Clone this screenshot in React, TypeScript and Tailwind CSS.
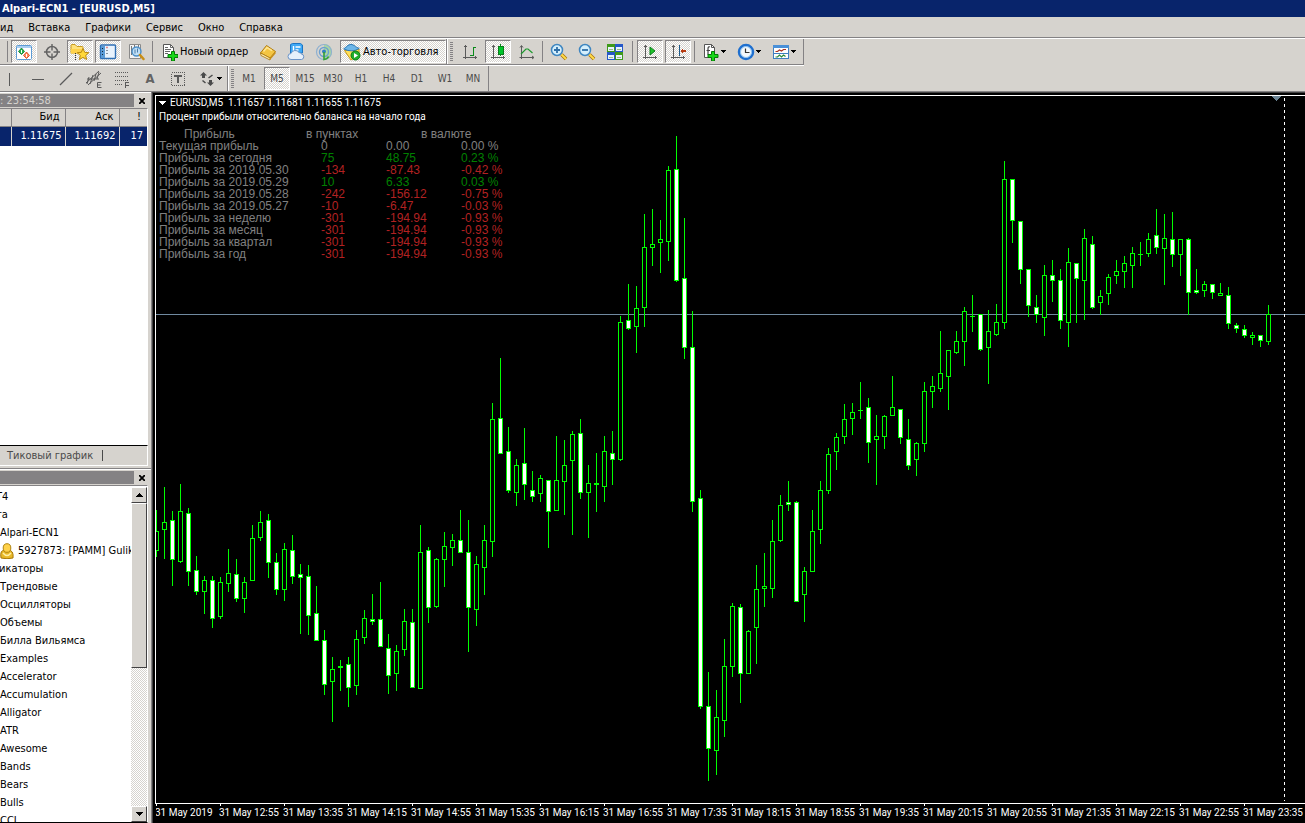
import type { ReactNode } from "react";

// [high, body top, body bottom, low, falling]
type Candle = [number, number, number, number, 0 | 1];

const candles: Candle[] = [
  [510, 531, 551, 557, 0], [487, 522, 530, 559, 0], [511, 520, 560, 586, 1], [484, 511, 562, 563, 0],
  [508, 513, 572, 586, 1], [556, 570, 592, 595, 1], [576, 580, 592, 614, 0], [576, 580, 619, 628, 1],
  [577, 582, 617, 619, 0], [549, 573, 584, 592, 0], [559, 574, 599, 602, 1], [577, 582, 599, 613, 0],
  [525, 538, 581, 581, 0], [511, 522, 538, 541, 0], [514, 520, 563, 578, 1], [553, 562, 590, 595, 1],
  [543, 549, 590, 601, 0], [535, 550, 577, 584, 1], [564, 574, 578, 634, 1], [565, 576, 616, 635, 1],
  [586, 613, 641, 641, 1], [630, 640, 685, 695, 1], [657, 669, 682, 722, 0], [660, 666, 668, 691, 0],
  [657, 664, 688, 707, 1], [630, 639, 686, 695, 0], [610, 618, 638, 644, 0], [594, 619, 622, 625, 1],
  [582, 619, 647, 647, 1], [634, 648, 676, 694, 1], [645, 651, 674, 691, 0], [609, 621, 650, 656, 0],
  [609, 622, 688, 688, 1], [525, 552, 689, 689, 0], [547, 550, 608, 623, 1], [558, 559, 607, 608, 0],
  [532, 546, 560, 587, 0], [534, 540, 548, 566, 0], [510, 540, 553, 553, 1], [520, 552, 608, 652, 1],
  [556, 564, 610, 626, 0], [525, 540, 568, 595, 0], [403, 419, 542, 557, 0], [358, 418, 454, 454, 1],
  [427, 451, 491, 493, 1], [459, 465, 493, 506, 0], [428, 463, 485, 500, 1], [471, 490, 497, 502, 1],
  [475, 478, 494, 502, 0], [480, 480, 512, 548, 1], [436, 480, 511, 511, 0], [440, 465, 482, 515, 0],
  [431, 434, 461, 535, 0], [419, 433, 493, 499, 1], [465, 483, 493, 538, 0], [453, 483, 485, 512, 0],
  [436, 451, 487, 502, 0], [431, 453, 460, 485, 1], [316, 322, 460, 461, 0], [284, 320, 329, 330, 1],
  [286, 308, 327, 353, 0], [214, 247, 308, 327, 0], [209, 244, 248, 266, 0], [220, 239, 243, 273, 0],
  [166, 170, 242, 261, 0], [136, 169, 281, 282, 1], [218, 278, 348, 359, 1], [311, 347, 502, 512, 1],
  [490, 498, 707, 709, 1], [672, 706, 749, 781, 1], [690, 717, 751, 775, 0], [639, 666, 721, 737, 0],
  [603, 606, 667, 677, 0], [604, 607, 674, 703, 1], [630, 631, 674, 674, 0], [565, 589, 628, 664, 0],
  [553, 586, 589, 607, 0], [520, 541, 589, 598, 0], [495, 505, 541, 542, 0], [481, 502, 505, 511, 1],
  [501, 502, 602, 602, 1], [567, 571, 595, 622, 0], [510, 531, 572, 572, 0], [481, 490, 530, 544, 0],
  [448, 454, 491, 494, 0], [433, 437, 452, 470, 0], [404, 419, 437, 444, 0], [403, 412, 419, 435, 0],
  [382, 410, 411, 419, 0], [398, 407, 443, 463, 1], [415, 436, 440, 485, 0], [415, 416, 437, 449, 0],
  [376, 407, 416, 416, 0], [409, 409, 438, 444, 1], [419, 439, 466, 470, 1], [442, 443, 460, 476, 0],
  [382, 391, 444, 452, 0], [376, 386, 392, 408, 0], [331, 373, 389, 392, 0], [350, 350, 377, 410, 0],
  [331, 341, 353, 354, 0], [307, 311, 342, 366, 0], [295, 316, 317, 332, 0], [314, 314, 350, 351, 1],
  [310, 331, 348, 384, 0], [304, 322, 335, 336, 0], [161, 179, 323, 329, 0], [179, 179, 221, 243, 1],
  [221, 221, 270, 284, 1], [269, 269, 306, 317, 1], [295, 307, 315, 323, 1], [265, 275, 318, 336, 0],
  [260, 275, 281, 302, 1], [269, 280, 321, 329, 1], [248, 262, 323, 347, 0], [263, 263, 279, 323, 1],
  [229, 238, 281, 320, 0], [236, 244, 308, 309, 1], [290, 296, 303, 315, 0], [274, 277, 294, 305, 0],
  [260, 271, 276, 284, 0], [256, 263, 272, 288, 0], [247, 253, 266, 288, 0], [242, 254, 255, 266, 0],
  [233, 239, 254, 257, 0], [209, 235, 248, 254, 1], [214, 238, 249, 285, 0], [212, 239, 255, 267, 1],
  [239, 239, 255, 276, 0], [238, 239, 293, 315, 1], [269, 290, 293, 294, 1], [281, 284, 291, 297, 0],
  [284, 284, 293, 299, 1], [283, 293, 296, 296, 0], [287, 295, 324, 329, 1], [323, 325, 329, 333, 1],
  [325, 329, 336, 338, 1], [332, 335, 338, 345, 0], [335, 335, 341, 347, 1], [305, 314, 342, 345, 0],
];

const PLOT_TOP = 96;
const STEP = 8;

const times = [
  "2019", "12:55", "13:35", "14:15", "14:55", "15:35", "16:15", "16:55", "17:35",
  "18:15", "18:55", "19:35", "20:15", "20:55", "21:35", "22:15", "22:55", "23:35",
];

const profits = [
  { label: "Текущая прибыль", points: "0", money: "0.00", percent: "0.00 %", color: "text-[#808080]" },
  { label: "Прибыль за сегодня", points: "75", money: "48.75", percent: "0.23 %", color: "text-[#008000]" },
  { label: "Прибыль за 2019.05.30", points: "-134", money: "-87.43", percent: "-0.42 %", color: "text-[#b22222]" },
  { label: "Прибыль за 2019.05.29", points: "10", money: "6.33", percent: "0.03 %", color: "text-[#008000]" },
  { label: "Прибыль за 2019.05.28", points: "-242", money: "-156.12", percent: "-0.75 %", color: "text-[#b22222]" },
  { label: "Прибыль за 2019.05.27", points: "-10", money: "-6.47", percent: "-0.03 %", color: "text-[#b22222]" },
  { label: "Прибыль за неделю", points: "-301", money: "-194.94", percent: "-0.93 %", color: "text-[#b22222]" },
  { label: "Прибыль за месяц", points: "-301", money: "-194.94", percent: "-0.93 %", color: "text-[#b22222]" },
  { label: "Прибыль за квартал", points: "-301", money: "-194.94", percent: "-0.93 %", color: "text-[#b22222]" },
  { label: "Прибыль за год", points: "-301", money: "-194.94", percent: "-0.93 %", color: "text-[#b22222]" },
];

const indicators = [
  "Трендовые", "Осцилляторы", "Объемы", "Билла Вильямса", "Examples", "Accelerator", "Accumulation",
  "Alligator", "ATR", "Awesome", "Bands", "Bears", "Bulls", "CCI",
];

const periods = ["M1", "M5", "M15", "M30", "H1", "H4", "D1", "W1", "MN"];

function Icon({ children, w = 18, h = 18, crisp = false }: { children: ReactNode; w?: number; h?: number; crisp?: boolean }) {
  return (
    <svg
      width={w}
      height={h}
      viewBox={`0 0 ${w} ${h}`}
      fill="none"
      shapeRendering={crisp ? "crispEdges" : "auto"}
      className="shrink-0"
      aria-hidden="true"
    >
      {children}
    </svg>
  );
}

function Tool({ label, pressed = false, children }: { label: string; pressed?: boolean; children: ReactNode }) {
  return (
    <button
      type="button"
      aria-label={label}
      aria-pressed={pressed}
      className={
        pressed
          ? "flex h-[23px] w-[26px] shrink-0 items-center justify-center border border-[#848284] border-r-white border-b-white bg-[conic-gradient(#fff_25%,#d6d3ce_0_50%,#fff_0_75%,#d6d3ce_0)] bg-[length:2px_2px]"
          : "flex h-[23px] w-[26px] shrink-0 items-center justify-center"
      }
    >
      {children}
    </button>
  );
}

function DropTool({ label, children }: { label: string; children: ReactNode }) {
  return (
    <button type="button" aria-label={label} className="flex h-[23px] w-[35px] shrink-0 items-center gap-px pl-1">
      {children}
      <Caret />
    </button>
  );
}

function Caret() {
  return (
    <Icon w={5} h={3} crisp>
      <path d="M0 0h5v1h-1v1h-1v1h-1v-1h-1v-1h-1z" fill="#000" />
    </Icon>
  );
}

function Sep() {
  return <div className="h-[21px] w-px shrink-0 bg-[#848284]" />;
}

function Grip() {
  return (
    <div className="h-[19px] w-[3px] shrink-0 bg-[linear-gradient(#848284_50%,#d6d3ce_50%)] bg-[length:3px_2px]" />
  );
}

function Axes() {
  return <path d="M4 2v14M2 14h14M3 3h3M14 13v3" stroke="#5a5a5a" />;
}

function PlusBadge() {
  return (
    <path d="M9.500 8.500h3v3h3.500v3h-3.500v3.500h-3v-3.500H6v-3h3.500z" fill="#18d818" stroke="#067a06" />
  );
}

function MainToolbar() {
  return (
    <div className="flex w-fit border-b border-white">
      <div className="flex h-[26px] items-center border-b border-[#848284] pl-[7px]">
        <Sep />
        <div className="ml-[3px] flex gap-0.5">
          <Tool label="Обзор рынка" pressed>
            <Icon>
              <rect x="1.500" y="2.500" width="15" height="14" rx="1" fill="#fff" stroke="#5b9bd5" />
              <path d="M2 3h14v2H2z" fill="#a9cdf0" />
              <path d="M6.500 5l3 3.500-3 3-3-3z" fill="#22b14c" stroke="#0b7a2a" strokeWidth=".8" />
              <path d="M6.500 7v3" stroke="#fff" />
              <path d="M11.500 9l3 3.500-3 3-3-3z" fill="#ff8a5c" stroke="#d03a10" strokeWidth=".8" />
              <path d="M11.500 11v3" stroke="#fff" />
            </Icon>
          </Tool>
          <Tool label="Окно данных">
            <Icon>
              <circle cx="9" cy="9" r="5.500" stroke="#636363" strokeWidth="1.500" />
              <path d="M9 1v6.500M9 10.500V17M1 9h6.500M10.500 9H17" stroke="#636363" strokeWidth="1.400" />
            </Icon>
          </Tool>
          <Tool label="Навигатор" pressed>
            <Icon w={20} h={18}>
              <path d="M1 2.500q0-1 1-1h3l2 2h5q1 0 1 1V10H1z" fill="#ffe27a" stroke="#c79a1e" />
              <path d="M1 6h12v4.500H1z" fill="#ffd24a" />
              <path d="M5.500 10v7" stroke="#333" strokeDasharray="1 1" />
              <path d="M13 5.500l1.700 3.800 4.100.4-3.100 2.700.9 4.100-3.600-2.100-3.600 2.100.9-4.100-3.100-2.700 4.100-.4z" fill="#ffd83a" stroke="#b98910" />
            </Icon>
          </Tool>
          <Tool label="Терминал" pressed>
            <Icon>
              <rect x="1.500" y="2" width="15" height="13.500" rx="1" fill="#e9f3fd" stroke="#2f6fb5" strokeWidth="1.400" />
              <path d="M2 3h4v12H2z" fill="#5b9bd5" />
              <path d="M3.500 5v1M3.500 8v1M3.500 11v1" stroke="#123" />
              <path d="M7.500 4.500h1" stroke="#d22" strokeWidth="1.500" />
              <path d="M7.500 7.500h1M7.500 10.500h1" stroke="#234" />
            </Icon>
          </Tool>
          <Tool label="Тестер стратегий">
            <Icon>
              <path d="M2.500 1.500h11v14h-11z" fill="#f3f3f3" stroke="#8a8a8a" />
              <path d="M4.500 3v9M7.500 2v4M11.500 2v4" stroke="#777" />
              <circle cx="9.500" cy="8.500" r="4.500" fill="#b7dcf7" fillOpacity=".85" stroke="#4a8ec8" strokeWidth="1.400" />
              <path d="M8 6.500v4M10.500 5.500v4" stroke="#4a7ca8" />
              <path d="M13 12l3.500 4" stroke="#c98f16" strokeWidth="2.500" strokeLinecap="round" />
            </Icon>
          </Tool>
        </div>
        <div className="mx-[3px]">
          <Sep />
        </div>
        <button type="button" className="flex h-[23px] w-[99px] shrink-0 items-center gap-0.5 pl-1.5 whitespace-nowrap">
          <Icon w={16} h={18}>
            <path d="M1.500 1.500h7l3 3v10h-10z" fill="#fff" stroke="#555" />
            <path d="M8.500 1.500v3h3M3 4.500h3M3 6.500h6M3 8.500h5M3 10.500h3" stroke="#666" />
            <PlusBadge />
          </Icon>
          Новый ордер
        </button>
        <div className="flex gap-0.5">
          <Tool label="MetaEditor">
            <Icon>
              <path d="M1.500 10L7.500 2.500l9 6L11 15z" fill="#f4c542" stroke="#b07c10" />
              <path d="M1.500 10L11 15v2L2 12.500z" fill="#fff1b8" stroke="#a87408" strokeWidth=".8" />
              <path d="M11 15l5.500-6.500v2L11 17z" fill="#c98f16" />
              <path d="M4.500 8.500L8 4.500l5 3.200" stroke="#ffe693" strokeWidth="1.500" />
            </Icon>
          </Tool>
          <Tool label="VPS">
            <Icon>
              <path d="M3.500 1.500l2-1h8l2 1.500v8h-12z" fill="#3fa9f5" stroke="#1c75c4" />
              <path d="M6.500 3v6M8.500 4h5M8.500 7h3" stroke="#fff" strokeWidth="1.400" />
              <path d="M4 16.500a3 3 0 010-6 4.500 4.500 0 018-1 3.500 3.500 0 012.500 1.500 2.800 2.800 0 010 5.500z" fill="#e6f0fb" stroke="#6b93c7" />
            </Icon>
          </Tool>
          <Tool label="Сигналы">
            <Icon>
              <path d="M9 1a8 8 0 018 8 8 8 0 01-8 8z" fill="#a8d8a0" />
              <circle cx="9" cy="9" r="7.500" stroke="#8fb0d0" strokeWidth="1.200" />
              <circle cx="9" cy="9" r="4.500" stroke="#6a9fd0" strokeWidth="1.400" />
              <circle cx="9" cy="8.500" r="2" fill="#2f7fc4" />
              <path d="M9 9v7.500q3.500-.5 4.500-3" stroke="#35a035" strokeWidth="1.600" />
            </Icon>
          </Tool>
        </div>
        <button
          type="button"
          aria-pressed="true"
          className="ml-[3px] flex h-[23px] w-[106px] shrink-0 items-center gap-0.5 border border-[#848284] border-r-white border-b-white bg-[conic-gradient(#fff_25%,#d6d3ce_0_50%,#fff_0_75%,#d6d3ce_0)] bg-[length:2px_2px] pl-0.5 whitespace-nowrap"
        >
          <Icon>
            <path d="M1.500 7.500L8 17l8-5.500V6z" fill="#ffdf5a" stroke="#c9980f" />
            <path d="M.8 6c1-2 3-1.500 3.700-3.500q3.500-2.500 7 0c.5 2 3 1.500 4.700 3q-7 4.500-15.400.5z" fill="#6db6e8" stroke="#2c78b5" />
            <circle cx="12.500" cy="12.500" r="4.500" fill="#1fae2b" stroke="#0b7a16" />
            <path d="M11 10l4 2.500-4 2.500z" fill="#fff" />
          </Icon>
          Авто-торговля
        </button>
      </div>
      <div className="h-[26px] w-[2px] border-b border-l border-[#848284] bg-white" />
      <div className="flex h-[26px] items-center border-r border-b border-[#848284] pl-0.5">
        <Grip />
        <div className="ml-1 flex gap-0.5">
          <Tool label="Бары">
            <Icon crisp>
              <Axes />
              <path d="M9 12h3M12 4v9M12 4h3" stroke="#0a8a1a" strokeWidth="1" />
            </Icon>
          </Tool>
          <Tool label="Японские свечи" pressed>
            <Icon crisp>
              <Axes />
              <path d="M11 1v12" stroke="#0a8a1a" />
              <rect x="9" y="3" width="5" height="8" fill="#00c52a" stroke="#0a7a1a" />
            </Icon>
          </Tool>
          <Tool label="Линия">
            <Icon>
              <path d="M4.500 3v13M2.500 14.500h14M3 4.500l1.500-2 1.500 2M15 13l2 1.500-2 1.500" stroke="#5a5a5a" />
              <path d="M4 11l5-5h2l4.500 4" stroke="#1d9a2d" strokeWidth="1.200" />
            </Icon>
          </Tool>
        </div>
        <div className="mx-[3px]">
          <Sep />
        </div>
        <div className="flex gap-0.5">
          <Tool label="Приблизить">
            <Icon>
              <circle cx="7" cy="7" r="5.500" fill="#d5effc" stroke="#3f86c0" strokeWidth="1.500" />
              <path d="M4 7h6M7 4v6" stroke="#2f6fa8" strokeWidth="1.800" />
              <path d="M11.500 11.500l4.500 4.500" stroke="#a8740c" strokeWidth="3.500" />
              <path d="M11.500 11.500l4.500 4.500" stroke="#ffdc4a" strokeWidth="2" />
            </Icon>
          </Tool>
          <Tool label="Отдалить">
            <Icon>
              <circle cx="7" cy="7" r="5.500" fill="#d5effc" stroke="#3f86c0" strokeWidth="1.500" />
              <path d="M4 7h6" stroke="#2f6fa8" strokeWidth="1.800" />
              <path d="M11.500 11.500l4.500 4.500" stroke="#a8740c" strokeWidth="3.500" />
              <path d="M11.500 11.500l4.500 4.500" stroke="#ffdc4a" strokeWidth="2" />
            </Icon>
          </Tool>
          <Tool label="Расположить окна">
            <Icon crisp>
              <path d="M1 1h8v8H1zM9 9h8v8H9z" fill="#3f9a1a" />
              <path d="M9 1h8v8H9zM1 9h8v8H1z" fill="#2558c8" />
              <path d="M2 4h6v4H2zM10 4h6v4h-6zM2 12h6v4H2zM10 12h6v4h-6z" fill="#e8f2ff" />
              <path d="M3 6h4v1H3zM11 6h4v1h-4zM3 14h4v1H3zM11 14h4v1h-4z" fill="#9ac088" />
            </Icon>
          </Tool>
        </div>
        <div className="mx-1">
          <Sep />
        </div>
        <div className="flex gap-0.5">
          <Tool label="Автопрокрутка" pressed>
            <Icon crisp>
              <Axes />
              <path d="M9 4v8l5-4z" fill="#1fc52a" stroke="#0a7a1a" shapeRendering="auto" />
            </Icon>
          </Tool>
          <Tool label="Сдвиг графика" pressed>
            <Icon crisp>
              <Axes />
              <path d="M10 2v11" stroke="#1c5a8a" />
              <path d="M11 8l3-3v2h3v2h-3v2z" fill="#b83a10" />
            </Icon>
          </Tool>
        </div>
        <div className="mx-[3px]">
          <Sep />
        </div>
        <DropTool label="Индикаторы">
          <Icon>
            <path d="M2.500 1.500h7l3 3v10h-10z" fill="#fff" stroke="#555" />
            <path d="M9.500 1.500v3h3" stroke="#555" />
            <path d="M8 4Q6 3 6 6v6M4.500 7.500H8" stroke="#444" strokeWidth="1.200" />
            <PlusBadge />
          </Icon>
        </DropTool>
        <DropTool label="Периоды">
          <Icon>
            <circle cx="9" cy="9" r="7" fill="#f4f8fc" stroke="#1f6fcf" strokeWidth="2.500" />
            <circle cx="9" cy="9" r="5.500" stroke="#8cc0f0" />
            <path d="M8.500 5.500v4h4" stroke="#333" strokeWidth="1.200" />
          </Icon>
        </DropTool>
        <DropTool label="Шаблоны">
          <Icon>
            <rect x="1.500" y="2.500" width="15" height="13" fill="#fff" stroke="#3f7fc0" />
            <path d="M1 2h16v3H1z" fill="#4a90d8" />
            <path d="M2 10.500h14" stroke="#3f7fc0" />
            <path d="M3.500 8.500h2l2-1.500 2 1 2-1.500h2.500" stroke="#a83020" strokeWidth="1.200" />
            <path d="M3.500 14h2l2-2 2 2 2-2 2 1.500" stroke="#2a8a3a" strokeWidth="1.200" />
          </Icon>
        </DropTool>
      </div>
    </div>
  );
}

function DrawToolbar() {
  return (
    <div className="flex h-[25px] w-fit items-center border-r border-[#848284] pr-0.5 text-[10px] text-[#4a4a4a]">
      <div className="-ml-[3px] flex gap-0.5">
        <Tool label="Вертикальная линия">
          <Icon crisp>
            <path d="M8 3h1v13H8z" fill="#5a5a5a" />
          </Icon>
        </Tool>
        <Tool label="Горизонтальная линия">
          <Icon crisp>
            <path d="M3 9h12v1H3z" fill="#5a5a5a" />
          </Icon>
        </Tool>
        <Tool label="Трендовая линия">
          <Icon>
            <path d="M3 15L15 3" stroke="#5a5a5a" strokeWidth="1.200" />
          </Icon>
        </Tool>
        <Tool label="Равноудаленный канал">
          <Icon>
            <path d="M1 13L14 1M3 15L16 3M2 9h12M4 7l-2 7M8 5l-3 9M11 4l-2 7M14 2l-2 7" stroke="#5a5a5a" />
            <path d="M16.500 12.500h-4v5h4M12.500 15h3" stroke="#5a5a5a" />
          </Icon>
        </Tool>
        <Tool label="Линии Фибоначчи">
          <Icon crisp>
            <path d="M2 2.500h14M2 6.500h14M2 10.500h14M2 14.500h8" stroke="#5a5a5a" strokeDasharray="1 1" />
            <path d="M16 12.500h-3.500V18M13 15.500h3" stroke="#5a5a5a" />
          </Icon>
        </Tool>
        <Tool label="Текст">
          <span className="text-[13px] leading-none font-bold text-[#636363]">A</span>
        </Tool>
        <Tool label="Текстовая метка">
          <Icon w={14} h={14} crisp>
            <rect x=".5" y=".5" width="13" height="13" stroke="#5a5a5a" strokeDasharray="1 1" />
            <path d="M3 3h8v2H8v6H6V5H3z" fill="#5a5a5a" />
          </Icon>
        </Tool>
        <button type="button" aria-label="Стрелки" className="flex h-[23px] w-[34px] items-center gap-0.5 pl-1.5">
          <Icon w={16} h={16}>
            <path d="M4.500 1L8 4.500H6V7H3V4.500H1zM11.500 15L8 11.500h2V9h3v2.500h2z" fill="#4a4a4a" />
            <path d="M3.500 9.500l3 2.500M9.500 7l4-3" stroke="#4a4a4a" strokeWidth="1.500" />
          </Icon>
          <Caret />
        </button>
      </div>
      <div className="h-[25px] w-[2px] border-l border-[#848284] bg-white" />
      <div className="ml-0.5 flex items-center">
        <Grip />
      </div>
      <div className="ml-0.5 flex gap-0.5">
        {periods.map((p) => (
          <Tool key={p} label={p} pressed={p === "M5"}>
            {p}
          </Tool>
        ))}
      </div>
    </div>
  );
}

function PanelTitle({ children }: { children?: ReactNode }) {
  return (
    <div className="flex h-[15px] items-center">
      <div className="h-[13px] w-[134px] bg-[#848284] leading-[13px] text-[#d6d3ce]">{children}</div>
      <button type="button" aria-label="Закрыть" className="flex h-[13px] flex-1 items-center justify-center pl-px">
        <Icon w={6} h={6}>
          <path d="M0 0l6 6M6 0L0 6" stroke="#000" strokeWidth="1.800" />
        </Icon>
      </button>
    </div>
  );
}

function MarketWatch() {
  return (
    <section className="flex h-[377px] shrink-0 flex-col border-t border-[#848284]">
      <div className="border-t border-white pr-[3px]">
        <PanelTitle>: 23:54:58</PanelTitle>
      </div>
      <div className="mr-[3px] flex min-h-0 flex-1 flex-col border-t border-r border-[#848284] border-r-white bg-white">
        <table className="w-full table-fixed border-collapse text-right">
          <thead>
            <tr className="h-[17px] bg-[#d6d3ce]">
              <th className="w-[11px] border-r border-b border-[#848284] p-0" />
              <th className="w-[54px] border-r border-b border-[#848284] p-0 pr-[5px] font-normal">Бид</th>
              <th className="w-[54px] border-r border-b border-[#848284] p-0 pr-[5px] font-normal">Аск</th>
              <th className="border-b border-[#848284] p-0 pr-[6px] font-normal">!</th>
            </tr>
          </thead>
          <tbody>
            <tr className="h-5 bg-[#08246b] text-white">
              <td className="border-r border-[#d6d3ce] p-0" />
              <td className="border-r border-[#d6d3ce] p-0 pr-[3px]">1.11675</td>
              <td className="border-r border-[#d6d3ce] p-0 pr-[3px]">1.11692</td>
              <td className="p-0 pr-[4px]">17</td>
            </tr>
          </tbody>
        </table>
      </div>
      <div className="mr-[3px] flex h-[21px] items-center gap-[9px] border-t border-r border-b border-black border-r-white border-b-white pl-[7px] text-[#4a4a4a]">
        <button type="button">Тиковый график</button>
        <div className="h-[11px] w-px bg-[#4a4a4a]" />
      </div>
      <div className="h-[2px]" />
    </section>
  );
}

function ScrollButton({ up = false }: { up?: boolean }) {
  return (
    <button
      type="button"
      aria-label={up ? "Вверх" : "Вниз"}
      className="flex h-4 w-4 shrink-0 items-center justify-center border border-white border-r-[#424142] border-b-[#424142] bg-[#d6d3ce]"
    >
      <Icon w={7} h={4} crisp>
        <path d={up ? "M3 0h1v1h1v1h1v1h1v1H0V3h1V2h1V1h1z" : "M0 0h7v1H6v1H5v1H4v1H3V3H2V2H1V1H0z"} fill="#000" />
      </Icon>
    </button>
  );
}

function Navigator() {
  return (
    <section className="flex min-h-0 flex-1 flex-col border-t border-[#848284]">
      <div className="border-t border-white pr-[3px]">
        <PanelTitle />
      </div>
      <div className="mr-[3px] flex min-h-0 flex-1 border-t border-r border-b border-[#848284] border-r-white border-b-black bg-white pt-px">
        <ul className="min-w-0 flex-1 overflow-hidden pt-px leading-[18px] whitespace-nowrap">
          <li className="-ml-1 h-[18px]">T4</li>
          <li className="-ml-1 h-[18px]">та</li>
          <li className="h-[18px]">Alpari-ECN1</li>
          <li className="flex h-[18px] items-center gap-1">
            <Icon w={14} h={16}>
              <path d="M1 15q-1.500-8 4-8h3q6 0 5 8-6 1.500-12 0z" fill="#e8b92a" stroke="#a87808" />
              <ellipse cx="7" cy="5" rx="3.800" ry="4.300" fill="#ffd24a" stroke="#b08410" />
              <path d="M3 10q4 5 8 0" stroke="#fff0a8" strokeWidth="1.500" />
            </Icon>
            <span>5927873: [PAMM] Gulik</span>
          </li>
          <li className="-ml-px h-[18px]">икаторы</li>
          {indicators.map((name) => (
            <li key={name} className="h-[18px]">
              {name}
            </li>
          ))}
        </ul>
        <div className="flex w-4 shrink-0 flex-col bg-[conic-gradient(#fff_25%,#d6d3ce_0_50%,#fff_0_75%,#d6d3ce_0)] bg-[length:2px_2px]">
          <ScrollButton up />
          <div className="h-[165px] border border-white border-r-[#424142] border-b-[#424142] bg-[#d6d3ce]" />
          <div className="flex-1" />
          <ScrollButton />
        </div>
      </div>
    </section>
  );
}

function ProfitTable() {
  return (
    <table className="mt-1 table-fixed border-collapse text-left font-['Liberation_Sans',sans-serif] text-[12px] leading-3 whitespace-nowrap text-[#808080]">
      <thead>
        <tr className="h-3">
          <th className="w-[147px] p-0 pl-[25px] font-normal">Прибыль</th>
          <th className="w-[80px] p-0 font-normal">в пунктах</th>
          <th className="w-[125px] p-0 pl-[35px] font-normal" colSpan={2}>
            в валюте
          </th>
        </tr>
      </thead>
      <tbody>
        {profits.map((row) => (
          <tr key={row.label} className="h-3">
            <td className="p-0">{row.label}</td>
            <td className={`p-0 pl-[15px] ${row.color}`}>{row.points}</td>
            <td className={`w-[75px] p-0 ${row.color}`}>{row.money}</td>
            <td className={`w-[50px] p-0 ${row.color}`}>{row.percent}</td>
          </tr>
        ))}
      </tbody>
    </table>
  );
}

function Chart() {
  return (
    <main className="flex min-w-0 flex-1 flex-col border-t border-l border-[#848284] bg-black">
      <div className="flex min-h-0 flex-1 flex-col border-t border-l border-[#424142] pt-[2px] pl-[2px]">
        <div className="relative min-h-0 flex-1 overflow-hidden border-t border-b border-l border-white">
          <svg className="block h-full w-full" shapeRendering="crispEdges" role="img" aria-label="EURUSD,M5">
            <rect x="0" y={314 - PLOT_TOP} width="100%" height="1" fill="#708aa0" />
            {candles.map(([high, top, bottom, low, falling], i) => (
              <g key={i} transform={`translate(${i * STEP} ${-PLOT_TOP})`}>
                <rect x="0" y={high} width="1" height={low - high} fill="#00ff00" />
                <rect x="-2" y={top} width="5" height={bottom - top} fill="#00ff00" />
                {bottom - top > 2 && (
                  <rect x="-1" y={top + 1} width="3" height={bottom - top - 2} fill={falling ? "#fff" : "#000"} />
                )}
              </g>
            ))}
            <path d="M1128.500 2v703" stroke="#fff" strokeDasharray="3 3" />
            <path d="M1115 0h11l-5.500 5z" fill="#6b8494" />
          </svg>
          <div className="absolute top-0 left-[3px] font-[Roboto,sans-serif] text-[10px] leading-[14px] whitespace-nowrap text-white">
            <div className="flex items-center gap-1">
              <Icon w={7} h={4} crisp>
                <path d="M0 0h7v1H6v1H5v1H4v1H3V3H2V2H1V1H0z" fill="#fff" />
              </Icon>
              <span className="whitespace-pre">EURUSD,M5  1.11657 1.11681 1.11655 1.11675</span>
            </div>
            <p>Процент прибыли относительно баланса на начало года</p>
            <ProfitTable />
          </div>
        </div>
        <div className="ml-px flex h-[19px] shrink-0 overflow-hidden font-[Roboto,sans-serif] text-[10px] whitespace-nowrap text-white">
          {times.map((t) => (
            <div key={t} className="w-16 shrink-0">
              <div className="h-[2px] w-px bg-white" />
              <div className="-ml-px leading-[14px]">31 May {t}</div>
            </div>
          ))}
        </div>
      </div>
    </main>
  );
}

export default function App() {
  return (
    <div className="flex h-screen flex-col overflow-hidden bg-[#d6d3ce] font-['DejaVu_Sans_Condensed','DejaVu_Sans',sans-serif] text-[11px] leading-[14px] text-black">
      <header className="h-[17px] shrink-0 bg-[#08246b] pl-0.5 leading-[17px] font-bold text-white">
        Alpari-ECN1 - [EURUSD,M5]
      </header>
      <nav className="flex h-[21px] shrink-0 items-center gap-[15px] border-b border-[#848284] pt-px">
        <button type="button">ид</button>
        <button type="button">Вставка</button>
        <button type="button">Графики</button>
        <button type="button">Сервис</button>
        <button type="button">Окно</button>
        <button type="button">Справка</button>
      </nav>
      <div className="shrink-0 border-t border-white">
        <MainToolbar />
        <DrawToolbar />
      </div>
      <div className="flex min-h-0 flex-1">
        <aside className="flex w-[151px] shrink-0 flex-col">
          <MarketWatch />
          <Navigator />
        </aside>
        <Chart />
      </div>
    </div>
  );
}
